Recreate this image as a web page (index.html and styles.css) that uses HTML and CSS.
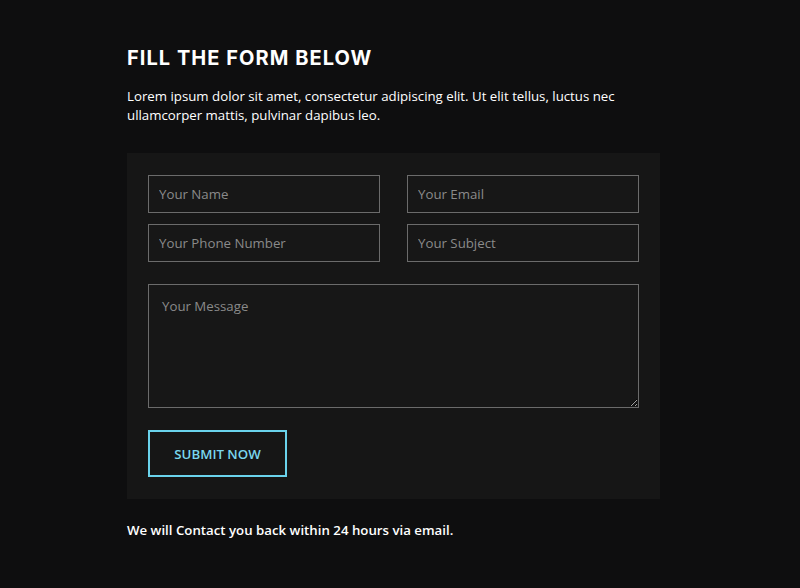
FILE: index.html
```html
<!DOCTYPE html>
<html>
<head>
<title>Contact Form</title>
<link rel="stylesheet" href="styles.css">
</head>
<body>

<div id="main">
<h1>Fill the form below</h1>
<p class="intro">Lorem ipsum dolor sit amet, consectetur adipiscing elit. Ut elit tellus, luctus nec ullamcorper mattis, pulvinar dapibus leo.</p>

<form class="contact">
  <div class="fields">
    <input type="text" placeholder="Your Name">
    <input type="email" placeholder="Your Email">
    <input type="text" placeholder="Your Phone Number">
    <input type="text" placeholder="Your Subject">
  </div>
  <textarea placeholder="Your Message"></textarea>
  <button type="button">Submit now</button>
</form>

<p class="note">We will Contact you back within 24 hours via email.</p>
</div>

</body>
</html>
```

FILE: styles.css
```css
body { margin: 0; background: #0e0e0f; color: #fff;
  font-family: "Open Sans", "Liberation Sans", sans-serif; }

#main { width: 533px; margin: 0 0 0 127px; padding-top: 45px; }

h1 { margin: 0; font-family: "Inter", "Open Sans", sans-serif;
  font-weight: 700; font-size: 20px; text-transform: uppercase;
  letter-spacing: 1.05px; line-height: 26px; }

.intro { margin: 16px 0 0; font-size: 13.25px; line-height: 19px; }

.contact { margin-top: 28px; background: #161616; padding: 22px 21px 22px;
  display: flex; flex-direction: column; }

.fields { display: grid; grid-template-columns: 1fr 1fr; column-gap: 27px;
  row-gap: 11px; }

input, textarea { box-sizing: border-box; background: #171717;
  border: 1px solid #6b6b6b; color: #ccc;
  font: 13.25px "Open Sans", sans-serif;
  padding: 0 10px; height: 38px; outline: none; }

textarea { margin-top: 22px; height: 124px; padding: 12px 13px;
  resize: vertical; }

::placeholder { color: #8a8a8a; }

button { margin-top: 22px; align-self: flex-start; width: 139px; height: 47px;
  background: transparent; border: 2px solid #6ad3ec; color: #7ad6ee;
  font: 600 13.25px "Open Sans", sans-serif; text-transform: uppercase;
  padding-top: 1px; }

.note { margin: 22px 0 0; font-size: 13.25px; font-weight: 600; }
```
